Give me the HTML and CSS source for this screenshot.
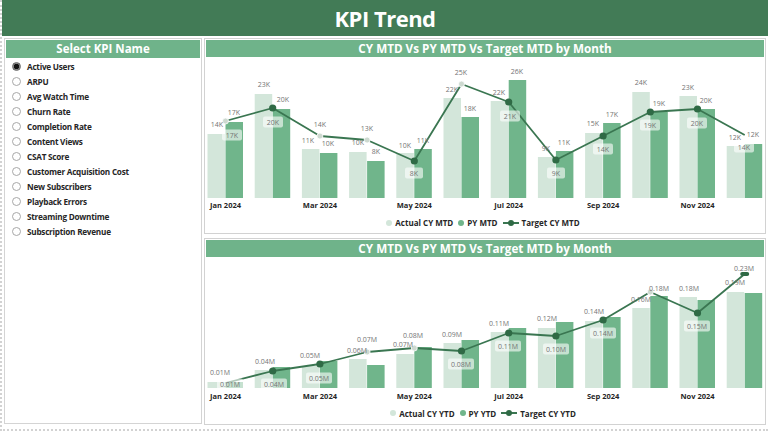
FILE: index.html
```html
<!DOCTYPE html>
<html>
<head>
<meta charset="utf-8">
<title>KPI Trend</title>
<link rel="stylesheet" href="styles.css">
</head>
<body>
<div class="page">
  <header class="topbar"><h1 class="topbar-title">KPI Trend</h1></header>
  <main class="main">
    <aside class="slicer">
      <div class="slicer-title">Select KPI Name</div>
      <ul class="kpi-list">
        <li class="kpi kpi-selected"><span class="radio"></span>Active Users</li>
        <li class="kpi"><span class="radio"></span>ARPU</li>
        <li class="kpi"><span class="radio"></span>Avg Watch Time</li>
        <li class="kpi"><span class="radio"></span>Churn Rate</li>
        <li class="kpi"><span class="radio"></span>Completion Rate</li>
        <li class="kpi"><span class="radio"></span>Content Views</li>
        <li class="kpi"><span class="radio"></span>CSAT Score</li>
        <li class="kpi"><span class="radio"></span>Customer Acquisition Cost</li>
        <li class="kpi"><span class="radio"></span>New Subscribers</li>
        <li class="kpi"><span class="radio"></span>Playback Errors</li>
        <li class="kpi"><span class="radio"></span>Streaming Downtime</li>
        <li class="kpi"><span class="radio"></span>Subscription Revenue</li>
      </ul>
    </aside>
    <section class="charts">
      <div class="card card-mtd">
        <div class="card-title">CY MTD Vs PY MTD Vs Target MTD by Month</div>
        <svg class="plot plot-mtd" width="558" height="156" viewBox="206 57 558 156">
          <g class="bars-cy">
            <rect x="207.5" y="134" width="17.5" height="64"/>
            <rect x="254.7" y="94" width="17.5" height="104"/>
            <rect x="301.9" y="149" width="17.5" height="49"/>
            <rect x="349.1" y="152" width="17.5" height="46"/>
            <rect x="396.3" y="153" width="17.5" height="45"/>
            <rect x="443.5" y="98" width="17.5" height="100"/>
            <rect x="490.7" y="101" width="17.5" height="97"/>
            <rect x="537.9" y="157" width="17.5" height="41"/>
            <rect x="585.1" y="133" width="17.5" height="65"/>
            <rect x="632.3" y="92" width="17.5" height="106"/>
            <rect x="679.5" y="96" width="17.5" height="102"/>
            <rect x="726.7" y="146" width="17.5" height="52"/>
          </g>
          <g class="bars-py">
            <rect x="225.5" y="122" width="17.5" height="76"/>
            <rect x="272.7" y="109" width="17.5" height="89"/>
            <rect x="319.9" y="153" width="17.5" height="45"/>
            <rect x="367.1" y="161" width="17.5" height="37"/>
            <rect x="414.3" y="149" width="17.5" height="49"/>
            <rect x="461.5" y="117" width="17.5" height="81"/>
            <rect x="508.7" y="80" width="17.5" height="118"/>
            <rect x="555.9" y="151" width="17.5" height="47"/>
            <rect x="603.1" y="123" width="17.5" height="75"/>
            <rect x="650.3" y="112" width="17.5" height="86"/>
            <rect x="697.5" y="109" width="17.5" height="89"/>
            <rect x="744.7" y="144" width="17.5" height="54"/>
          </g>
          <polyline class="target-line" points="225.5,121 272.7,108 319.9,136 367.1,140 414.3,161 461.5,84 508.7,102 555.9,160 603.1,136 650.3,112 697.5,109 744.7,135"/>
          <g class="marker-light">
            <circle cx="225.5" cy="121" r="3"/>
            <circle cx="319.9" cy="136" r="3"/>
            <circle cx="367.1" cy="140" r="3"/>
            <circle cx="461.5" cy="84" r="3"/>
          </g>
          <g class="marker-dark">
            <circle cx="272.7" cy="108" r="3.6"/>
            <circle cx="414.3" cy="161" r="3.6"/>
            <circle cx="508.7" cy="102" r="3.6"/>
            <circle cx="555.9" cy="160" r="3.6"/>
            <circle cx="603.1" cy="136" r="3.6"/>
            <circle cx="650.3" cy="112" r="3.6"/>
            <circle cx="697.5" cy="109" r="3.6"/>
          </g>
          <g class="data-label">
            <text x="217" y="126.5">14K</text><text x="234" y="114.5">17K</text>
            <text x="264" y="86.5">23K</text><text x="283" y="101.5">20K</text>
            <text x="308" y="142.5">11K</text><text x="328" y="145.5">10K</text><text x="320" y="126.5">14K</text>
            <text x="358" y="144.5">10K</text><text x="376" y="153.5">8K</text><text x="367" y="130.5">13K</text>
            <text x="405" y="147.5">10K</text><text x="423" y="142.5">11K</text>
            <text x="452" y="91.5">22K</text><text x="470" y="110.5">18K</text><text x="461" y="74.5">25K</text>
            <text x="499" y="94.5">22K</text><text x="517" y="73.5">26K</text>
            <text x="546" y="150.5">9K</text><text x="564" y="144.5">11K</text>
            <text x="593" y="125.5">15K</text><text x="612" y="116.5">17K</text>
            <text x="641" y="84.5">24K</text><text x="659" y="105.5">19K</text>
            <text x="688" y="89.5">23K</text><text x="706" y="102.5">20K</text>
            <text x="735" y="139.5">12K</text><text x="753" y="136.5">12K</text>
          </g>
          <g class="box-label">
            <rect x="222" y="129.5" width="20" height="11" rx="2"/><text x="232" y="137.5">17K</text>
            <rect x="263" y="116.5" width="20" height="11" rx="2"/><text x="273" y="124.5">20K</text>
            <rect x="405" y="167.5" width="18" height="11" rx="2"/><text x="414" y="175.5">8K</text>
            <rect x="500" y="110.5" width="20" height="11" rx="2"/><text x="510" y="118.5">21K</text>
            <rect x="547" y="167.5" width="18" height="11" rx="2"/><text x="556" y="175.5">9K</text>
            <rect x="593" y="143.5" width="20" height="11" rx="2"/><text x="603" y="151.5">14K</text>
            <rect x="640" y="119.5" width="20" height="11" rx="2"/><text x="650" y="127.5">19K</text>
            <rect x="687" y="117.5" width="20" height="11" rx="2"/><text x="697" y="125.5">20K</text>
            <rect x="734" y="141.5" width="20" height="11" rx="2"/><text x="744" y="149.5">14K</text>
          </g>
          <g class="axis-label">
            <text x="225.5" y="208">Jan 2024</text>
            <text x="319.9" y="208">Mar 2024</text>
            <text x="414.3" y="208">May 2024</text>
            <text x="508.7" y="208">Jul 2024</text>
            <text x="603.1" y="208">Sep 2024</text>
            <text x="697.5" y="208">Nov 2024</text>
          </g>
        </svg>
        <div class="legend">
          <span class="legend-item"><span class="dot dot-cy"></span>Actual CY MTD</span>
          <span class="legend-item"><span class="dot dot-py"></span>PY MTD</span>
          <span class="legend-item"><span class="line-key"><span class="line-key-dot"></span></span>Target CY MTD</span>
        </div>
      </div>
      <div class="card card-ytd">
        <div class="card-title">CY MTD Vs PY MTD Vs Target MTD by Month</div>
        <svg class="plot plot-ytd" width="558" height="146" viewBox="206 257 558 146">
          <g class="bars-cy">
            <rect x="207.5" y="382" width="17.5" height="6"/>
            <rect x="254.7" y="370" width="17.5" height="18"/>
            <rect x="301.9" y="366" width="17.5" height="22"/>
            <rect x="349.1" y="359" width="17.5" height="29"/>
            <rect x="396.3" y="354" width="17.5" height="34"/>
            <rect x="443.5" y="343" width="17.5" height="45"/>
            <rect x="490.7" y="332" width="17.5" height="56"/>
            <rect x="537.9" y="328" width="17.5" height="60"/>
            <rect x="585.1" y="321" width="17.5" height="67"/>
            <rect x="632.3" y="308" width="17.5" height="80"/>
            <rect x="679.5" y="297" width="17.5" height="91"/>
            <rect x="726.7" y="292" width="17.5" height="96"/>
          </g>
          <g class="bars-py">
            <rect x="225.5" y="382" width="17.5" height="6"/>
            <rect x="272.7" y="367" width="17.5" height="21"/>
            <rect x="319.9" y="361" width="17.5" height="27"/>
            <rect x="367.1" y="365" width="17.5" height="23"/>
            <rect x="414.3" y="347" width="17.5" height="41"/>
            <rect x="461.5" y="340" width="17.5" height="48"/>
            <rect x="508.7" y="328" width="17.5" height="60"/>
            <rect x="555.9" y="322" width="17.5" height="66"/>
            <rect x="603.1" y="317" width="17.5" height="71"/>
            <rect x="650.3" y="296" width="17.5" height="92"/>
            <rect x="697.5" y="300" width="17.5" height="88"/>
            <rect x="744.7" y="293" width="17.5" height="95"/>
          </g>
          <polyline class="target-line" points="225.5,383 272.7,371 319.9,364 367.1,352 414.3,348 461.5,351 508.7,333 555.9,336 603.1,320 650.3,292 697.5,313 744.7,274"/>
          <g class="marker-light">
            <circle cx="367.1" cy="352" r="3"/>
            <circle cx="414.3" cy="348" r="3"/>
            <circle cx="650.3" cy="292" r="3"/>
          </g>
          <g class="marker-dark">
            <circle cx="272.7" cy="371" r="3.6"/>
            <circle cx="319.9" cy="364" r="3.6"/>
            <circle cx="461.5" cy="351" r="3.6"/>
            <circle cx="508.7" cy="333" r="3.6"/>
            <circle cx="555.9" cy="336" r="3.6"/>
            <circle cx="603.1" cy="320" r="3.6"/>
            <circle cx="697.5" cy="313" r="3.6"/>
            <rect x="740.2" y="272" width="9" height="4" rx="2"/>
          </g>
          <g class="data-label">
            <text x="220" y="374.5">0.01M</text>
            <text x="265" y="363.5">0.04M</text>
            <text x="310" y="357.5">0.05M</text>
            <text x="367" y="341.5">0.07M</text><text x="357" y="352.5">0.06M</text>
            <text x="413" y="337.5">0.08M</text><text x="403" y="346.5">0.07M</text>
            <text x="452" y="336.5">0.09M</text>
            <text x="499" y="325.5">0.11M</text>
            <text x="547" y="320.5">0.12M</text>
            <text x="594" y="313.5">0.14M</text>
            <text x="641" y="301.5">0.16M</text><text x="659" y="290.5">0.18M</text>
            <text x="689" y="290.5">0.18M</text>
            <text x="744" y="270.5">0.23M</text><text x="735" y="284.5">0.19M</text>
          </g>
          <g class="box-label">
            <rect x="217" y="378.5" width="26" height="11" rx="2"/><text x="230" y="386.5">0.01M</text>
            <rect x="261" y="378.5" width="26" height="11" rx="2"/><text x="274" y="386.5">0.04M</text>
            <rect x="306" y="372.5" width="26" height="11" rx="2"/><text x="319" y="380.5">0.05M</text>
            <rect x="448" y="358.5" width="26" height="11" rx="2"/><text x="461" y="366.5">0.08M</text>
            <rect x="495" y="340.5" width="26" height="11" rx="2"/><text x="508" y="348.5">0.11M</text>
            <rect x="543" y="343.5" width="26" height="11" rx="2"/><text x="556" y="351.5">0.10M</text>
            <rect x="590" y="327.5" width="26" height="11" rx="2"/><text x="603" y="335.5">0.14M</text>
            <rect x="684" y="320.5" width="26" height="11" rx="2"/><text x="697" y="328.5">0.15M</text>
          </g>
          <g class="axis-label">
            <text x="225.5" y="399">Jan 2024</text>
            <text x="319.9" y="399">Mar 2024</text>
            <text x="414.3" y="399">May 2024</text>
            <text x="508.7" y="399">Jul 2024</text>
            <text x="603.1" y="399">Sep 2024</text>
            <text x="697.5" y="399">Nov 2024</text>
          </g>
        </svg>
        <div class="legend">
          <span class="legend-item"><span class="dot dot-cy"></span>Actual CY YTD</span>
          <span class="legend-item"><span class="dot dot-py"></span>PY YTD</span>
          <span class="legend-item"><span class="line-key"><span class="line-key-dot"></span></span>Target CY YTD</span>
        </div>
      </div>
    </section>
  </main>
</div>
</body>
</html>
```

FILE: styles.css
```css
html, body {
  margin: 0;
  padding: 0;
  background: #ffffff;
}
body {
  width: 768px;
  height: 434px;
  overflow: hidden;
  font-family: "Open Sans", "DejaVu Sans", sans-serif;
  color: #252525;
}
.page {
  width: 768px;
  height: 431px;
  box-sizing: border-box;
  border-left: 2px dotted #d2d2d2;
  border-bottom: 2px dotted #d2d2d2;
  display: flex;
  flex-direction: column;
}
.topbar {
  height: 36px;
  background: #427b56;
  display: flex;
  align-items: center;
  justify-content: center;
  flex: none;
}
.topbar-title {
  margin: 0;
  color: #ffffff;
  font-size: 22px;
  font-weight: 700;
  letter-spacing: -0.5px;
  line-height: 1;
}
.main {
  display: flex;
  gap: 2px;
  padding: 2px 2px 0 2px;
  align-items: flex-start;
}
.slicer {
  width: 198px;
  height: 386px;
  box-sizing: border-box;
  border: 1px solid #d4d4d4;
  padding: 1px;
  background: #ffffff;
}
.slicer-title {
  height: 18px;
  background: #6fb38a;
  color: #ffffff;
  font-weight: 700;
  font-size: 11.5px;
  line-height: 18px;
  text-align: center;
}
.kpi-list {
  list-style: none;
  margin: 0;
  padding: 1px 0 0 6px;
}
.kpi {
  display: flex;
  align-items: center;
  gap: 6px;
  height: 15px;
  font-size: 8.2px;
  font-weight: 700;
  letter-spacing: -0.25px;
  color: #262626;
  white-space: nowrap;
}
.radio {
  width: 7px;
  height: 7px;
  border: 1px solid #a8a8a8;
  border-radius: 50%;
  background: #ffffff;
  flex: none;
}
.kpi-selected .radio {
  border-color: #6a6a6a;
  background: radial-gradient(circle, #151515 0 2.4px, #8a8a8a 3px);
}
.charts {
  width: 562px;
  display: flex;
  flex-direction: column;
  gap: 4px;
}
.card {
  box-sizing: border-box;
  border: 1px solid #d2d2d2;
  padding: 1px;
  display: flex;
  flex-direction: column;
  background: #ffffff;
}
.card-mtd { height: 196px; }
.card-ytd { height: 187px; }
.card-title {
  height: 17px;
  flex: none;
  background: #6fb38a;
  color: #ffffff;
  font-weight: 700;
  font-size: 11.7px;
  line-height: 17px;
  text-align: center;
}
.plot {
  display: block;
  flex: none;
}
.bars-cy rect { fill: #d3e6da; }
.bars-py rect { fill: #70b58b; }
.target-line {
  fill: none;
  stroke: #3a7651;
  stroke-width: 1.8;
  stroke-linejoin: round;
}
.marker-dark circle, .marker-dark rect { fill: #2f6a45; }
.marker-light circle {
  fill: #cdd9d0;
  stroke: #ffffff;
  stroke-width: 0.8;
}
.data-label text {
  font-size: 7px;
  fill: #747474;
  text-anchor: middle;
}
.box-label rect {
  fill: #ffffff;
  fill-opacity: 0.6;
}
.box-label text {
  font-size: 7px;
  fill: #747474;
  text-anchor: middle;
}
.axis-label text {
  font-size: 7.5px;
  font-weight: 700;
  fill: #262626;
  text-anchor: middle;
}
.legend {
  flex: 1;
  display: flex;
  align-items: center;
  justify-content: center;
  gap: 5px;
  font-size: 8px;
  font-weight: 700;
  color: #262626;
  padding-right: 4px;
}
.legend-item {
  display: flex;
  align-items: center;
  gap: 3px;
}
.dot {
  width: 6px;
  height: 6px;
  border-radius: 50%;
}
.dot-cy { background: #d3e6da; }
.dot-py { background: #70b58b; }
.line-key {
  width: 16px;
  height: 2px;
  background: #3a7651;
  display: flex;
  align-items: center;
  justify-content: center;
}
.line-key-dot {
  width: 6px;
  height: 6px;
  border-radius: 50%;
  background: #2f6a45;
  flex: none;
}
```
